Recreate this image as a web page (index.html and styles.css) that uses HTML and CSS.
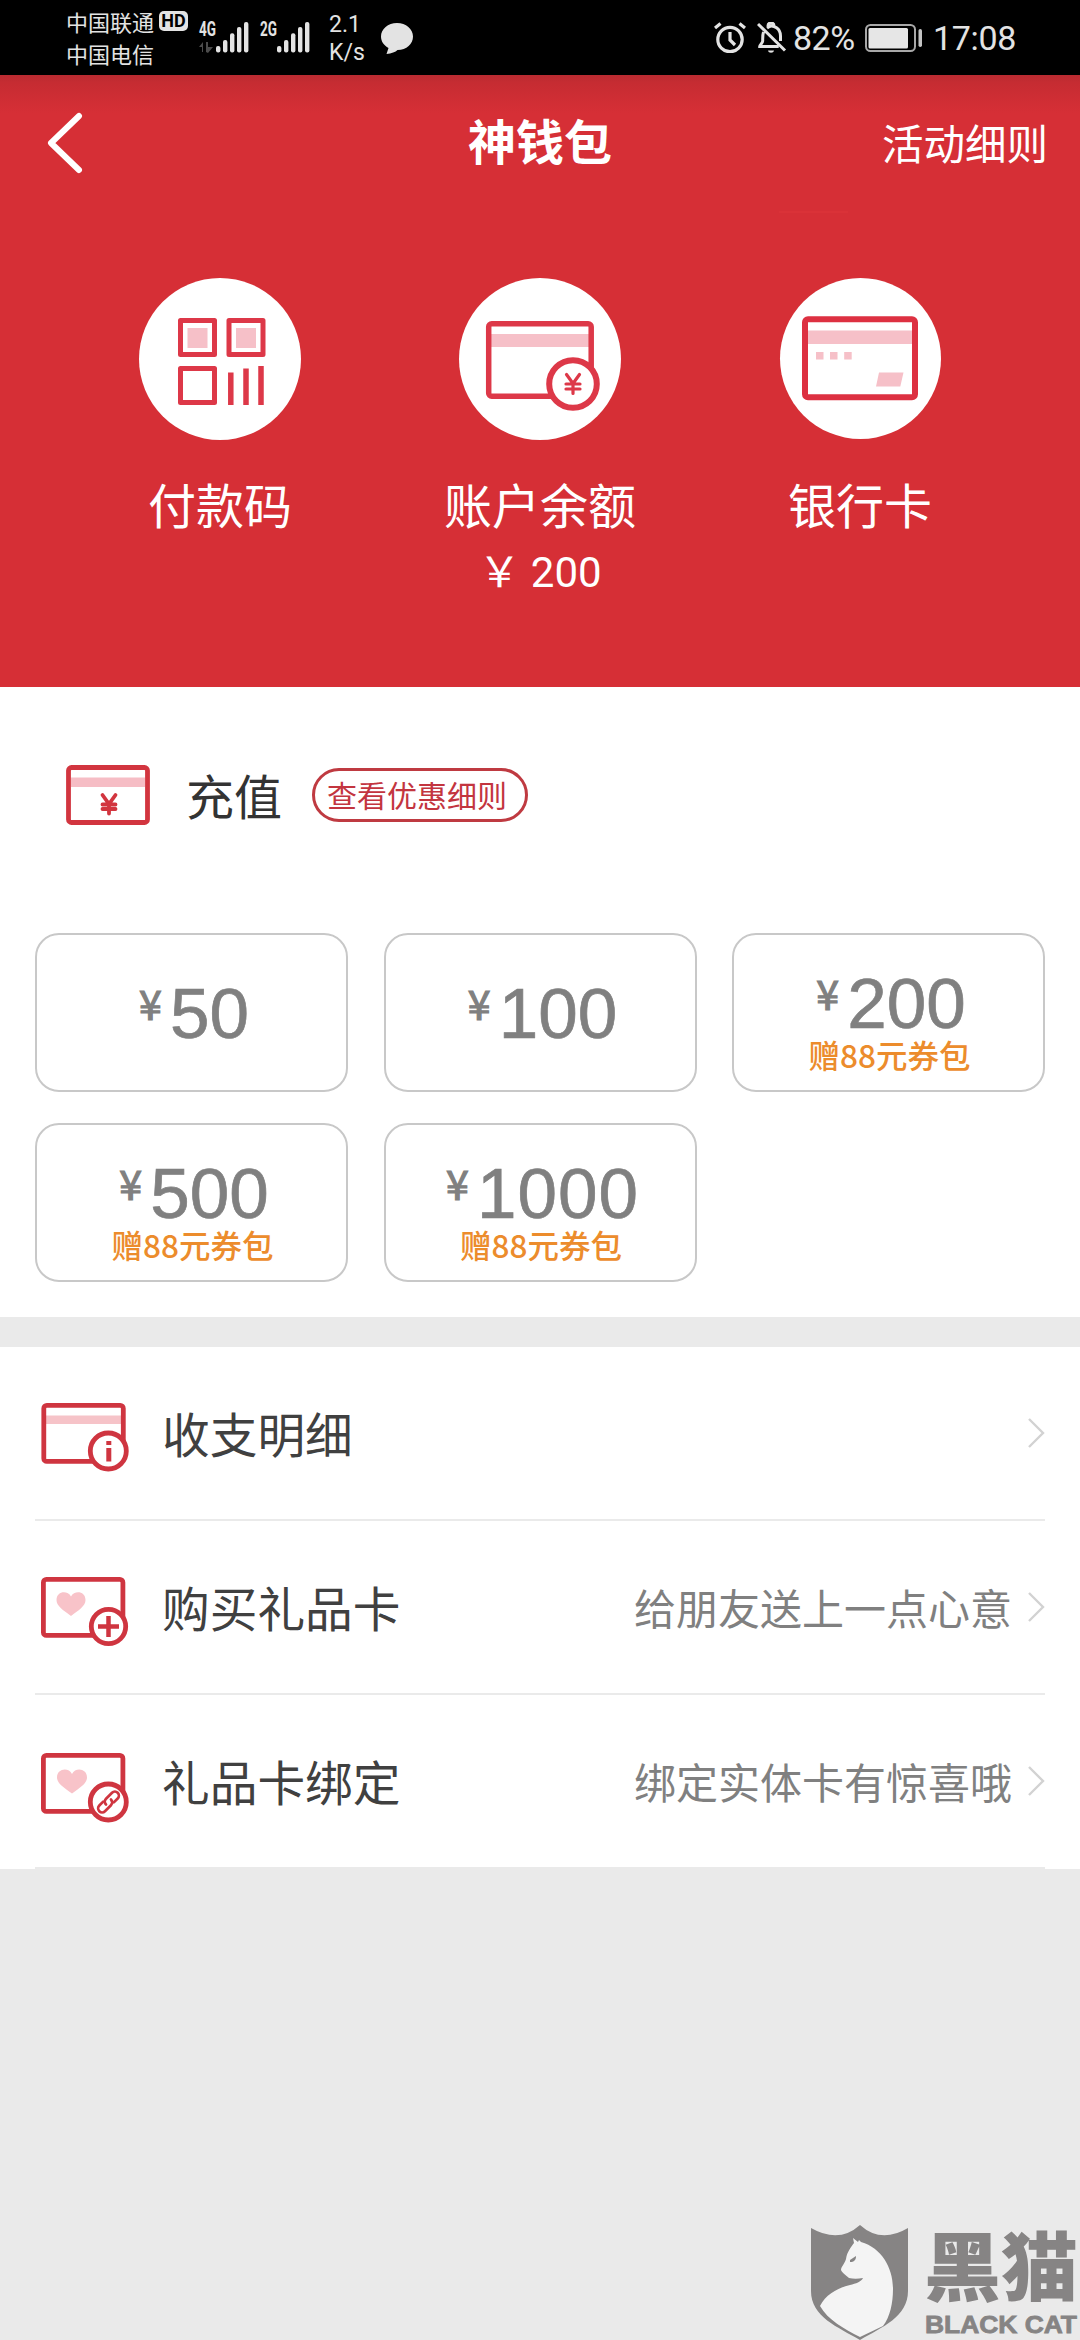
FILE: index.html
```html
<!DOCTYPE html>
<html lang="zh-CN">
<head>
<meta charset="utf-8">
<title>神钱包</title>
<link rel="stylesheet" href="styles.css">
</head>
<body>
<div class="page">
  <div class="status">
    <div class="carriers"><div class="carrier">中国联通<span class="hd">HD</span></div><div class="carrier">中国电信</div></div>
    <svg class="signals" width="112" height="44" viewBox="198 12 112 44" fill="#e3e3e3">
      <text x="199" y="35.7" class="net" textLength="17" lengthAdjust="spacingAndGlyphs">4G</text>
      <path d="M203 52V42l-4 5h3v5zM206 52V42h2v5h5l-5 6z" fill="#4c4c4c"/>
      <g id="bars"><rect x="216" y="46" width="4.400" height="6.500" rx="2"/><rect x="223" y="40" width="4.400" height="12.500" rx="2"/><rect x="230" y="33.300" width="4.400" height="19.200" rx="2"/><rect x="237" y="27" width="4.400" height="25.500" rx="2"/><rect x="244" y="22" width="4.400" height="30.500" rx="2"/></g>
      <text x="260" y="35.700" class="net" textLength="17" lengthAdjust="spacingAndGlyphs">2G</text>
      <use href="#bars" x="61"/>
    </svg>
    <div class="speed">2.1<br>K/s</div>
    <svg class="bubble" width="32" height="31" viewBox="0 0 32 31"><path d="M16 0C7 0 0 6 0 13.500c0 5 3 9 7.500 11.500L5.500 31c5-.5 9-2 11-4C25.500 27 32 21 32 13.500S25 0 16 0z" fill="#e3e3e3"/></svg>
    <svg class="alarm" width="32" height="31" viewBox="0 0 32 31" fill="none" stroke="#e3e3e3" stroke-width="3.200"><circle cx="16" cy="17.500" r="12.200"/><path d="M16 10v8l5 5M1 6l5.500-4.500M31 6l-5.500-4.500"/></svg>
    <svg class="bell" width="30" height="32" viewBox="0 0 30 32" fill="none" stroke="#e3e3e3" stroke-width="3"><path d="M1 2l27 26.500M6.500 10c-1 3-.8 6-.8 9 0 2-3 4-3 5.500h19M10 6c2-1.500 3-2 4.500-2s9 1.500 9 10v5M11 4c0-4 6-4 6 0"/><path d="M11 28.500h6c-.5 3-5.500 3-6 0z" fill="#e3e3e3" stroke="none"/></svg>
    <div class="pct">82%</div>
    <svg class="battery" width="58" height="28" viewBox="0 0 58 28"><rect x="1" y="1" width="49" height="26" rx="4.500" fill="none" stroke="#a8a8a8" stroke-width="2"/><rect x="3.500" y="4" width="39.500" height="20.500" rx="1.500" fill="#e6e6e6"/><rect x="53.500" y="5" width="3.500" height="18" rx="1.700" fill="#c4c4c4"/></svg>
    <div class="time">17:08</div>
  </div>

  <div class="hero">
    <div class="nav">
      <svg class="back" width="38" height="62" viewBox="0 0 38 62"><path d="M33 4L5 31l28 27" fill="none" stroke="#fff" stroke-width="6" stroke-linecap="round" stroke-linejoin="round"/></svg>
      <div class="title">神钱包</div>
      <div class="rules">活动细则</div>
    </div>
    <div class="seam"></div>
    <div class="actions">
      <div class="action">
        <svg class="disc" width="162" height="162" viewBox="0 0 162 162"><circle cx="81" cy="81" r="81" fill="#fff"/>
          <g fill="none" stroke="#dd3848" stroke-width="5" stroke-linejoin="round"><path d="M41.500 42.500H75.500V76.500H41.500zM90 42.500h34v34H90zM41.500 90.500H75.500V124.500H41.500z"/><path d="M91.800 94.500V127M107 90.500V127M122 88V127" stroke-width="5.500"/></g>
          <path d="M48.500 50h20v20h-20zM97 50h20v20H97z" fill="#f6c0c8"/></svg>
        <div class="label">付款码</div>
      </div>
      <div class="action">
        <svg class="disc" width="162" height="162" viewBox="0 0 162 162"><circle cx="81" cy="81" r="81" fill="#fff"/>
          <path d="M30 56h103v13H30z" fill="#f6c0c8"/>
          <g fill="none" stroke="#dd3848" stroke-width="5.500" stroke-linecap="round"><rect x="29.700" y="45.700" width="102.500" height="72.500" rx="3"/><circle cx="114" cy="106" r="23.800" fill="#fff" stroke-width="6"/><path d="M107.500 96.500l6.500 9 6.500-9M114 105.500v10M107 106h14M107 111h14" stroke-width="3.200"/></g></svg>
        <div class="label">账户余额</div>
        <div class="balance">￥ 200</div>
      </div>
      <div class="action">
        <svg class="disc" width="162" height="162" viewBox="0 0 162 162"><circle cx="81.500" cy="80.500" r="80.500" fill="#fff"/>
          <path d="M26 52.500h110V66H26zM37 74h7.500v7.500H37zM51 74h7.500v7.500H51zM65.200 74h7.500v7.500h-7.500zM100 94.500h24.500l-3.200 14H97z" fill="#f6c0c8"/>
          <rect x="26" y="41.300" width="110" height="78" rx="3" fill="none" stroke="#dd3041" stroke-width="6"/></svg>
        <div class="label">银行卡</div>
      </div>
    </div>
  </div>

  <div class="recharge">
    <div class="recharge-head">
      <svg class="rc-icon" width="84" height="60" viewBox="0 0 84 60"><path d="M5 12.500h74V22H5z" fill="#f6bdc5"/><g fill="none" stroke="#d2353f" stroke-linecap="round"><rect x="2.500" y="2.500" width="79" height="55" rx="3" stroke-width="4.800"/><path d="M36.500 30l6.500 9 6.500-9M43 38.500v10M36.500 39.500h13M36.500 44h13" stroke-width="3.800"/></g></svg>
      <div class="rc-title">充值</div>
      <div class="pill">查看优惠细则</div>
    </div>
    <div class="grid">
      <div class="card plain"><div class="amount"><span class="yen">¥</span>50</div></div>
      <div class="card plain"><div class="amount"><span class="yen">¥</span>100</div></div>
      <div class="card"><div class="amount"><span class="yen">¥</span>200</div><div class="gift">赠88元券包</div></div>
      <div class="card"><div class="amount"><span class="yen">¥</span>500</div><div class="gift">赠88元券包</div></div>
      <div class="card"><div class="amount wide"><span class="yen">¥</span>1000</div><div class="gift">赠88元券包</div></div>
    </div>
  </div>

  <div class="list">
    <div class="row">
      <svg class="r-icon" width="88" height="72" viewBox="0 0 88 72"><path d="M5 13.500h77V22H5z" fill="#f6c3c8"/><g fill="none" stroke="#cf3540" stroke-width="4.800"><rect x="2.800" y="3.400" width="79.500" height="56" rx="3"/><circle cx="67.300" cy="49" r="18" fill="#fff"/></g><path d="M65.300 39h5v4h-5zM65.300 46h5v13.500h-5z" fill="#cf3540"/></svg>
      <div class="r-title">收支明细</div><div class="r-note"></div>
      <svg class="arrow" width="18" height="32" viewBox="0 0 18 32"><path d="M2 2l14 14L2 30" fill="none" stroke="#d2d2d2" stroke-width="2.400"/></svg>
    </div>
    <div class="row">
      <svg class="r-icon" width="88" height="72" viewBox="0 0 88 72"><path d="M30 40C22 34 15.500 30 15.500 24c0-9 11-10 14.500-3.500C33.500 14 44.500 15 44.500 24c0 6-6.500 10-14.500 16z" fill="#f8c3c9"/><g fill="none" stroke="#cf3540" stroke-width="4.800"><rect x="2.400" y="3.400" width="79.500" height="56" rx="3"/><circle cx="67.500" cy="50.500" r="17.200" fill="#fff"/><path d="M57 50.500h21M67.500 40v21" stroke-width="4.500"/></g></svg>
      <div class="r-title">购买礼品卡</div><div class="r-note">给朋友送上一点心意</div>
      <svg class="arrow" width="18" height="32" viewBox="0 0 18 32"><path d="M2 2l14 14L2 30" fill="none" stroke="#d2d2d2" stroke-width="2.400"/></svg>
    </div>
    <div class="row">
      <svg class="r-icon low" width="88" height="72" viewBox="0 0 88 72"><path d="M31 40.500C23 34.500 16 30.500 16 24.500 16 15.500 27.500 14 31 21 34.500 14 46 15.500 46 24.500c0 6-7 10-15 16z" fill="#f8c3c9"/><g fill="none" stroke="#cf3540" stroke-width="4.800"><rect x="2.400" y="2.400" width="79.500" height="56" rx="3"/><circle cx="67.300" cy="49" r="18" fill="#fff"/><g transform="rotate(-45 67.500 49)" stroke-width="2.700" stroke-linecap="round"><path d="M71 53h5.500a4 4 0 0 0 0-8H68a4 4 0 0 0-4 4"/><path d="M64 45h-5.500a4 4 0 0 0 0 8H67a4 4 0 0 0 4-4"/></g></g></svg>
      <div class="r-title">礼品卡绑定</div><div class="r-note">绑定实体卡有惊喜哦</div>
      <svg class="arrow" width="18" height="32" viewBox="0 0 18 32"><path d="M2 2l14 14L2 30" fill="none" stroke="#d2d2d2" stroke-width="2.400"/></svg>
    </div>
  </div>

  <svg class="watermark" width="280" height="130" viewBox="800 2210 280 130">
    <path d="M811 2228q28 16 49-3 21 19 48 3v63c0 26-26 36-48 49-22-13-49-23-49-49z" fill="#868484"/>
    <path d="M853 2238l5 4 1-2 2 2c21 6 32 26 32 47 0 14-3 28-10 37l-23 11c-16-8-32-17-40-31 6-12 18-18 30-21 6-1.500 11-3 13-7-5 1-10 1-14 0-3-3-7-5-8-8 0-3 4-7 5-11 1-7 5-12 8-16z" fill="#f4f4f4"/>
    <path d="M850 2260l6-4c0 4-2 6-6 6z" fill="#868484"/>
    <text x="924" y="2295" class="wm-zh" textLength="154" lengthAdjust="spacingAndGlyphs">黑猫</text>
    <text x="925" y="2333" class="wm-en" textLength="152" lengthAdjust="spacingAndGlyphs">BLACK CAT</text>
  </svg>
</div>
</body>
</html>
```
FILE: styles.css
```css
* { box-sizing: border-box; }
body { margin: 0; background: #eaeaea; font-family: Roboto, "Noto Sans CJK SC", sans-serif; }
.page { position: relative; width: 1080px; height: 2340px; overflow: hidden; background: #eaeaea; }
svg { display: block; flex: none; }

.status { display: flex; align-items: flex-start; height: 75px; padding-left: 66px; background: #000; color: #e3e3e3; white-space: nowrap; }
.carriers { width: 132px; padding-top: 5px; }
.carrier { display: flex; align-items: center; height: 32px; font: 22px/32px "Noto Sans CJK SC", sans-serif; }
.hd { width: 29px; height: 20px; margin-left: 5px; border-radius: 5px; background: #e3e3e3; color: #000; font: bold 18px/20px Roboto, sans-serif; text-align: center; }
.signals { margin-top: 12px; }
.net { font: bold 19.500px Roboto, sans-serif; }
.speed { width: 52px; margin: 11px 0 0 19px; font-size: 23px; line-height: 27.500px; }
.bubble { margin-top: 23px; }
.alarm { margin: 22px 0 0 301px; }
.bell { margin: 22px 0 0 11px; }
.pct { width: 72px; margin: 18px 0 0 6px; font-size: 34px; line-height: 40px; letter-spacing: -.5px; }
.battery { margin-top: 24px; }
.time { margin: 18px 0 0 10px; font-size: 34px; line-height: 40px; letter-spacing: -.3px; }

.hero { height: 612px; background: linear-gradient(#ba2b31, #c62c32 8px, #d62f36 38px); color: #fff; }
.nav { display: grid; grid-template-columns: 240px 1fr 240px; align-items: center; height: 136px; }
.back { margin-left: 46px; }
.title { font: bold 48px/60px "Noto Sans CJK SC", sans-serif; text-align: center; padding-bottom: 8px; }
.rules { font: 41.500px/60px "Noto Sans CJK SC", sans-serif; text-align: right; padding: 0 32px 3px 0; }
.seam { width: 69px; height: 2px; margin-left: 779px; background: #da3238; }
.actions { display: grid; grid-template-columns: repeat(3, 320px); justify-content: center; padding-top: 65px; }
.action { display: flex; flex-direction: column; align-items: center; }
.label { margin-top: 28px; font: 48px/70px "Noto Sans CJK SC", sans-serif; }
.balance { margin-top: 5px; font-size: 42px; line-height: 60px; white-space: pre; }

.recharge { height: 630px; padding: 78px 35px 0; background: #fff; }
.recharge-head { display: flex; align-items: center; height: 60px; padding-left: 31px; }
.rc-title { margin-left: 36px; padding-bottom: 2px; font: 48px/60px "Noto Sans CJK SC", sans-serif; color: #333; }
.pill { width: 216px; height: 54px; margin-left: 30px; padding-left: 12px; border: 3px solid #bf3a41; border-radius: 27px; color: #c3353f; font: 30px/46px "Noto Sans CJK SC", sans-serif; white-space: nowrap; }
.grid { display: grid; grid-template-columns: repeat(3, 313px); grid-auto-rows: 159px; column-gap: 35.500px; row-gap: 31px; margin-top: 108px; }
.card { display: flex; flex-direction: column; align-items: center; padding-top: 32px; border: 2px solid #c8c8c8; border-radius: 24px; }
.plain { padding-top: 42px; }
.amount { display: flex; align-items: flex-start; height: 70px; padding-left: 5px; color: #808080; font: 71px/74px "Liberation Sans", sans-serif; -webkit-text-stroke: .7px #808080; }
.wide { letter-spacing: 1px; }
.yen { width: 31px; font: 41px/50px "Noto Sans CJK SC", sans-serif; -webkit-text-stroke: 1.200px #808080; }
.gift { padding-left: 2px; color: #ec8c2c; font: 500 31.500px/34px "Noto Sans CJK SC", sans-serif; }

.list { margin-top: 30px; background: #fff; padding: 0 35px; }
.row { display: flex; align-items: center; height: 174px; padding-left: 6px; border-bottom: 2px solid #eaeaea; }
.r-icon { margin-top: 9px; }
.low { margin-top: 15px; }
.r-title { margin-left: 33px; padding-bottom: 1px; font: 47.700px/60px "Noto Sans CJK SC", sans-serif; color: #404040; }
.r-note { flex: 1; margin-right: 15px; text-align: right; font: 42px/60px "Noto Sans CJK SC", sans-serif; color: #808080; }

.watermark { position: absolute; right: 0; bottom: 0; }
.wm-zh { font: 900 75px "Noto Sans CJK SC", sans-serif; fill: #868484; }
.wm-en { font: bold 24px "Liberation Sans", sans-serif; fill: #868484; stroke: #868484; stroke-width: .8px; }
```
